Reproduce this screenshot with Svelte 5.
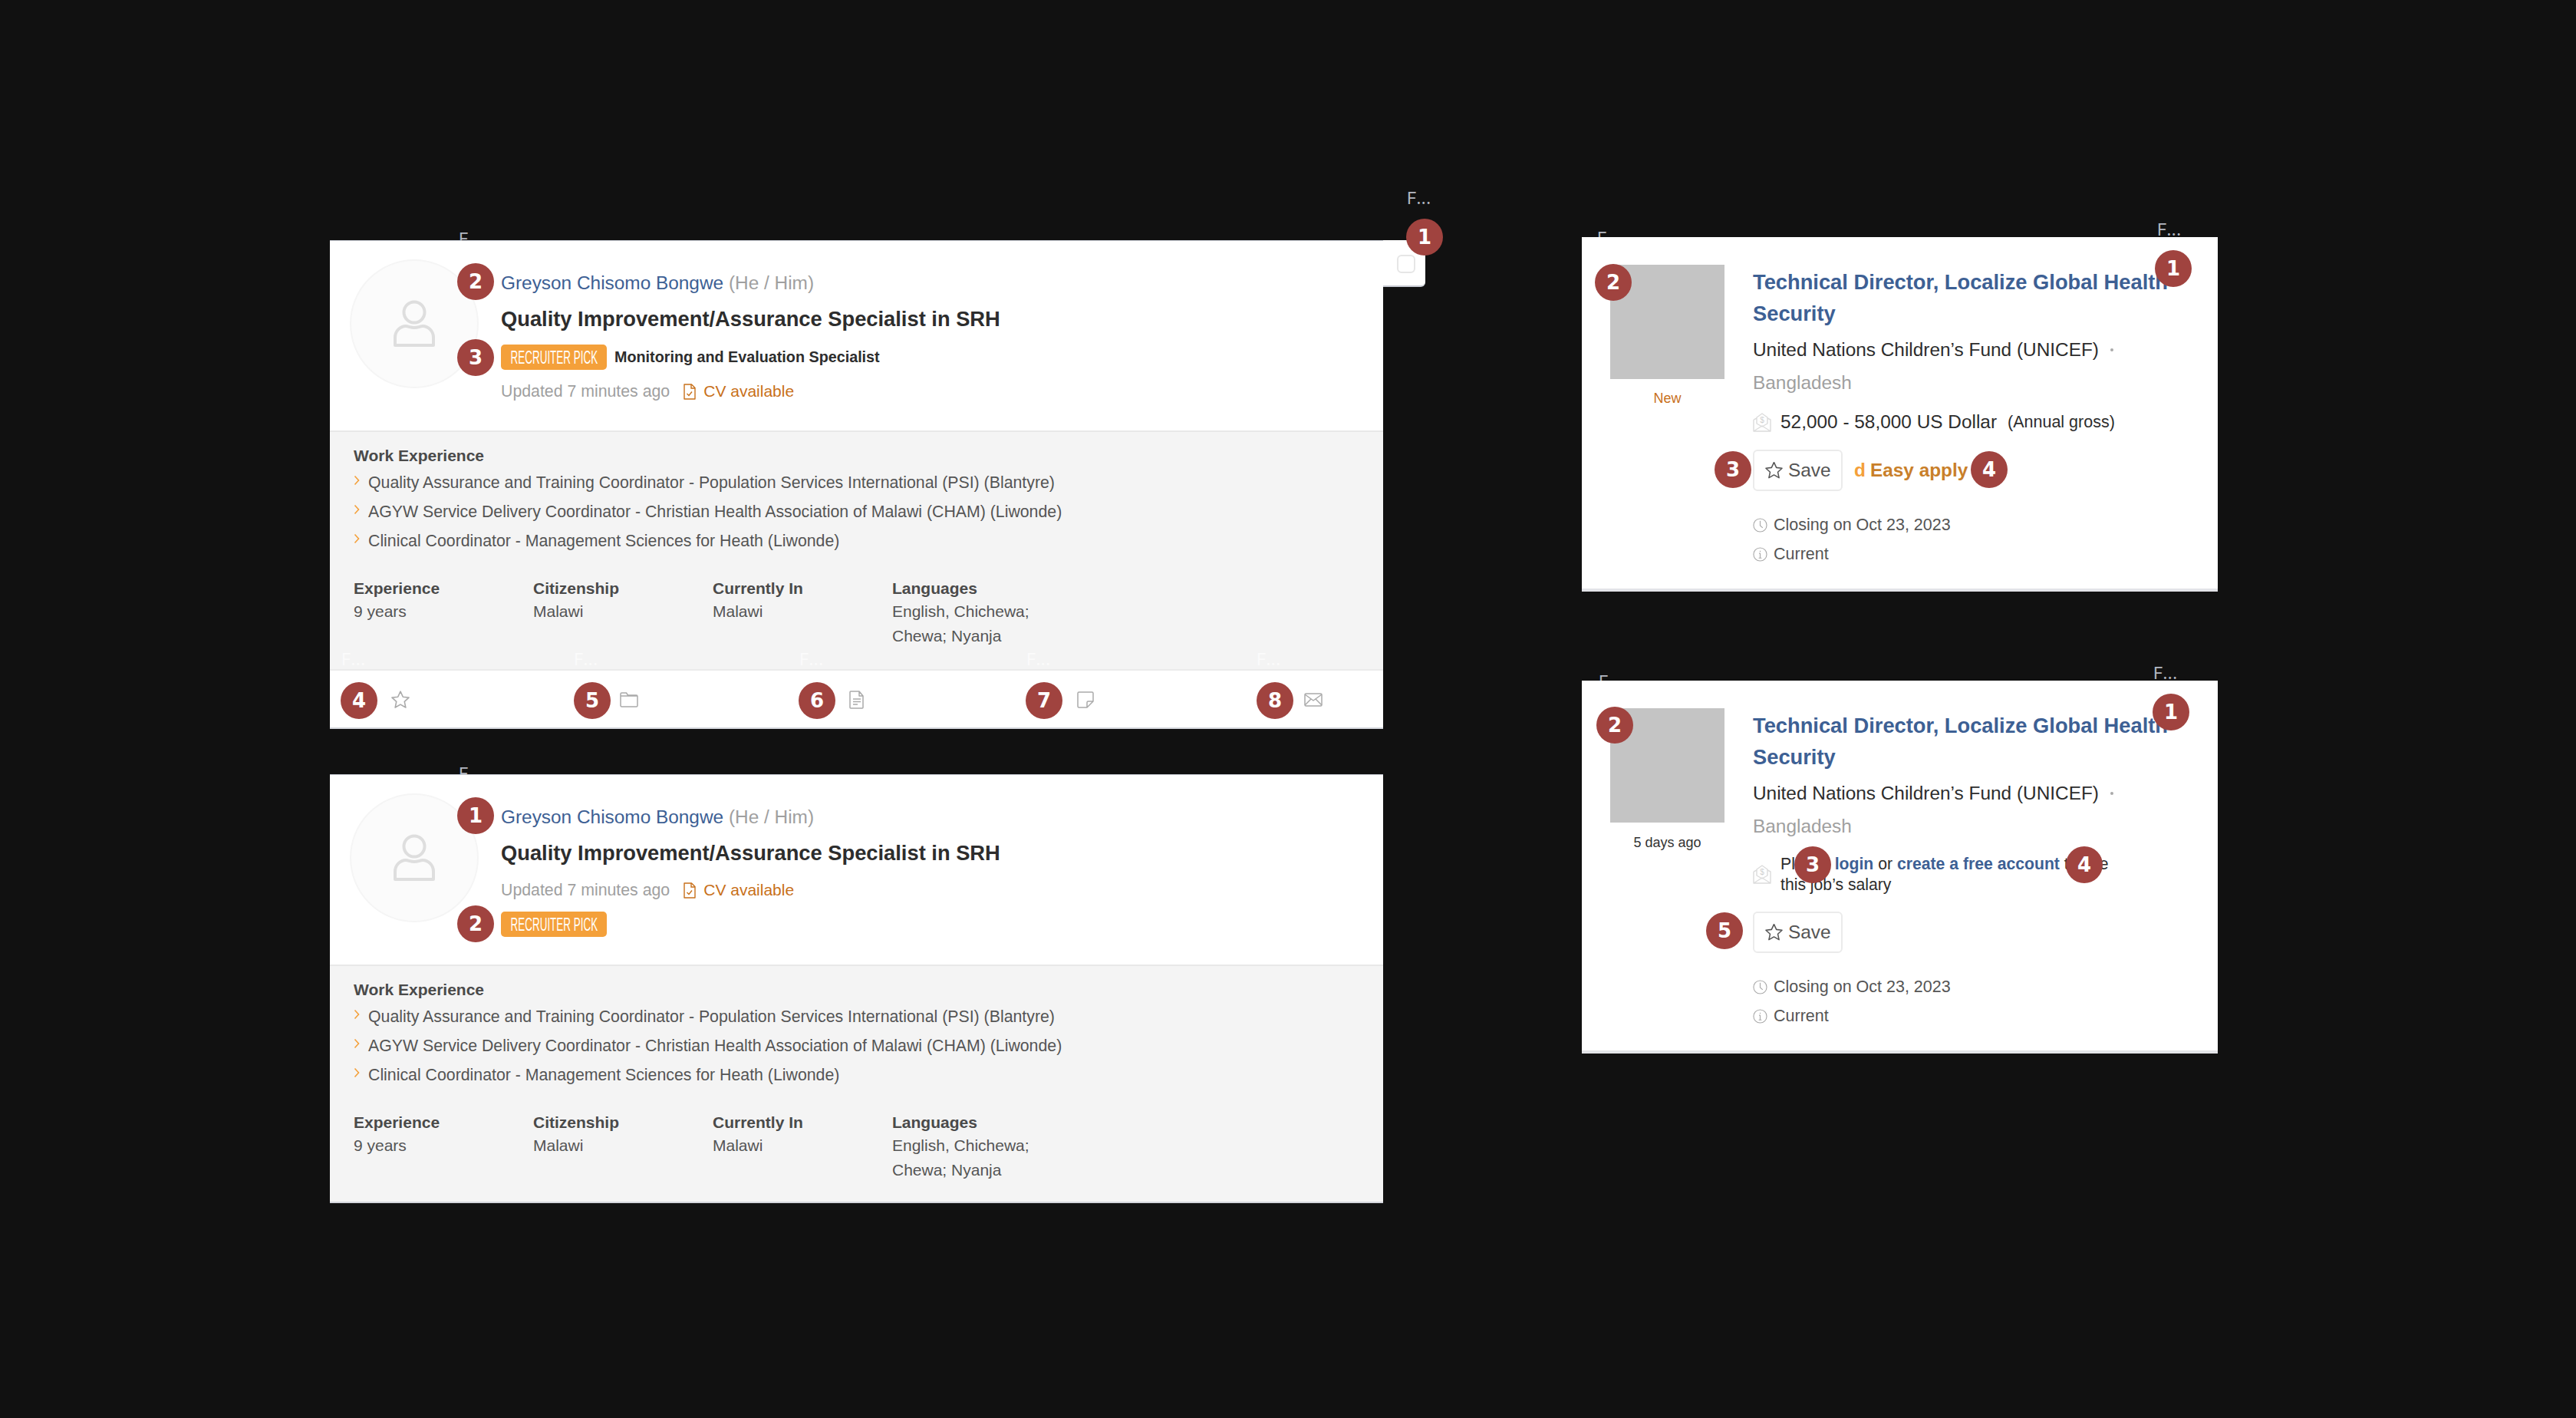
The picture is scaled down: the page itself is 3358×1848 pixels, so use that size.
<script>
  const work = [
    'Quality Assurance and Training Coordinator - Population Services International (PSI) (Blantyre)',
    'AGYW Service Delivery Coordinator - Christian Health Association of Malawi (CHAM) (Liwonde)',
    'Clinical Coordinator - Management Sciences for Heath (Liwonde)'
  ];
  const facts = [
    { label: 'Experience', value: '9 years' },
    { label: 'Citizenship', value: 'Malawi' },
    { label: 'Currently In', value: 'Malawi' },
    { label: 'Languages', value: 'English, Chichewa; Chewa; Nyanja' }
  ];
  const markers = [
    [1, 1857, 309], [2, 620, 367], [3, 620, 466], [4, 468, 913], [5, 772, 913], [6, 1065, 913], [7, 1361, 913], [8, 1662, 913],
    [1, 620, 1063], [2, 620, 1204],
    [1, 2833, 350], [2, 2103, 368], [3, 2259, 612], [4, 2593, 612],
    [1, 2830, 928], [2, 2105, 945], [3, 2363, 1127], [4, 2717, 1127], [5, 2248, 1213]
  ];
  const darkLabels = [
    [598, 298, 'F'], [598, 995, 'F'], [2082, 297, 'F'], [2084, 875, 'F'],
    [1834, 245, 'F...'], [2812, 286, 'F...'], [2807, 864, 'F...']
  ];
  const ghostLabels = [[445, 846], [748, 846], [1042, 846], [1338, 846], [1638, 846]];
</script>

{#snippet star(cls)}
  <svg class={cls} viewBox="1.500 2 21 20" fill="none" stroke="currentColor" stroke-width="1.4" stroke-linejoin="round"><path d="M12 2.500l2.900 6.200 6.700.8-5 4.600 1.400 6.700-6-3.400-6 3.400 1.400-6.700-5-4.600 6.700-.8z"/></svg>
{/snippet}

{#snippet person()}
  <div class="avatar">
    <svg width="56" height="62" viewBox="0 0 56 62" fill="none" stroke="#dedede" stroke-width="4"><circle cx="28" cy="16" r="13.500"/><path d="M3 59V49c0-9 7-15 14-15 3 0 6 2 11 2s8-2 11-2c7 0 14 6 14 15v10z" stroke-linejoin="round"/></svg>
  </div>
{/snippet}

{#snippet details()}
  <div class="body">
    <h4>Work Experience</h4>
    <ul>
      {#each work as w}
        <li><svg class="chev" viewBox="0 0 8 14" fill="none" stroke="#f4a03a" stroke-width="1.600"><path d="M1.500 1.500L6.500 7l-5 5.500"/></svg>{w}</li>
      {/each}
    </ul>
    <div class="facts">
      {#each facts as f}
        <div class="fact"><b>{f.label}</b><span>{f.value}</span></div>
      {/each}
    </div>
  </div>
{/snippet}

{#snippet updated()}
  <div class="meta">
    <span class="upd">Updated 7 minutes ago</span>
    <svg class="cvicon" viewBox="0 0 16 21" fill="none" stroke="#c8701a" stroke-width="1.400"><path d="M1 1h9.500L15 5.500V20H1z" stroke-linejoin="round"/><path d="M10 1v5h5M4.500 13l2.500 2.500 4-5"/></svg>
    <span class="cv">CV available</span>
  </div>
{/snippet}

{#snippet salaryIcon()}
  <svg class="salicon" viewBox="0 0 24 25" fill="none" stroke="#dcdcdc" stroke-width="1.400" stroke-linejoin="round"><path d="M1 9v15h22V9l-4-2M1 9l4-2M1 24l11-7 11 7"/><path d="M5 14V6l7-5 7 5v8l-7 4z"/><text x="12" y="13" font-size="10" text-anchor="middle" fill="#d0d0d0" stroke="none" font-family="Liberation Sans">$</text></svg>
{/snippet}

{#snippet jobHead()}
  <a class="jtitle">Technical Director, Localize Global Health Security</a>
  <div class="org"><span>United Nations Children’s Fund (UNICEF)</span><i class="dot"></i></div>
  <div class="loc">Bangladesh</div>
{/snippet}

{#snippet saveBtn()}
  <span class="save">{@render star('savestar')}Save</span>
{/snippet}

{#snippet closing()}
  <div class="info first">
    <svg viewBox="0 0 20 20" fill="none" stroke="#aaa" stroke-width="1.200"><circle cx="10" cy="10" r="9"/><path d="M10 4v6.500l3.500 3"/></svg>
    <span>Closing on Oct 23, 2023</span>
  </div>
  <div class="info">
    <svg viewBox="0 0 20 20" fill="none" stroke="#aaa" stroke-width="1.200"><circle cx="10" cy="10" r="9"/><path d="M10 8.500V15M10 5v1.600M8 15h4M8.500 8.500H10"/></svg>
    <span>Current</span>
  </div>
{/snippet}

<main class="canvas">
  {#each darkLabels as [x, y, t]}
    <span class="tag" style="left:{x}px;top:{y}px">{t}</span>
  {/each}

  <div class="tab">
    <span class="tabicon"></span>
  </div>

  <section class="card cand one">
    <header class="head">
      {@render person()}
      <div class="col">
        <div class="name"><a>Greyson Chisomo Bongwe</a> <span>(He / Him)</span></div>
        <div class="role">Quality Improvement/Assurance Specialist in SRH</div>
        <div class="pickrow"><span class="badge"><span>RECRUITER PICK</span></span><b>Monitoring and Evaluation Specialist</b></div>
        {@render updated()}
      </div>
    </header>
    {@render details()}
    <footer class="foot">
      {@render star('ficon')}
      <svg class="ficon" viewBox="0 0 24 20" fill="none" stroke="#aaa" stroke-width="1.500" stroke-linejoin="round"><path d="M1 4V2.500C1 1.500 1.500 1 2.500 1h6l2 3h11c1 0 1.500.5 1.500 1.500v12c0 1-.5 1.500-1.500 1.500h-19C1.500 19 1 18.500 1 17.500zM1 5h22"/></svg>
      <svg class="ficon" viewBox="0 0 24 24" fill="none" stroke="#aaa" stroke-width="1.500" stroke-linejoin="round"><path d="M4 1h11l5 6v15c0 .6-.4 1-1 1H4c-.6 0-1-.4-1-1V2c0-.6.4-1 1-1zM15 1v6h5M7 11h10M7 14.500h10M7 18h6"/></svg>
      <svg class="ficon" viewBox="0 0 24 24" fill="none" stroke="#aaa" stroke-width="1.500" stroke-linejoin="round"><path d="M2 3.500C2 2.500 2.500 2 3.500 2h17c1 0 1.500.5 1.500 1.500V14l-8 8H3.500C2.500 22 2 21.500 2 20.500zM22 14h-6.500c-1 0-1.500.5-1.500 1.500V22"/></svg>
      <svg class="ficon" viewBox="0 0 24 18" fill="none" stroke="#aaa" stroke-width="1.500" stroke-linejoin="round"><rect x="1" y="1" width="22" height="16" rx="1.500"/><path d="M1 2l11 8 11-8M1 16l8-8M23 16l-8-8"/></svg>
    </footer>
  </section>

  <section class="card cand two">
    <header class="head">
      {@render person()}
      <div class="col">
        <div class="name"><a>Greyson Chisomo Bongwe</a> <span>(He / Him)</span></div>
        <div class="role">Quality Improvement/Assurance Specialist in SRH</div>
        {@render updated()}
        <div class="pickrow after"><span class="badge"><span>RECRUITER PICK</span></span></div>
      </div>
    </header>
    {@render details()}
  </section>

  <section class="card job three">
    <div class="side"><div class="logo"></div><div class="age new">New</div></div>
    <div class="main">
      {@render jobHead()}
      <div class="salary">
        {@render salaryIcon()}
        <span class="amount">52,000 - 58,000 US Dollar</span><span class="per">(Annual gross)</span>
      </div>
      <div class="actions">
        {@render saveBtn()}
        <b class="d">d</b><b class="easy">Easy apply</b>
      </div>
      {@render closing()}
    </div>
  </section>

  <section class="card job four">
    <div class="side"><div class="logo"></div><div class="age">5 days ago</div></div>
    <div class="main">
      {@render jobHead()}
      <div class="salary login">
        {@render salaryIcon()}
        <p>Please <a>login</a> or <a>create a free account</a> to see this job’s salary</p>
      </div>
      <div class="actions">
        {@render saveBtn()}
      </div>
      {@render closing()}
    </div>
  </section>

  {#each ghostLabels as [x, y]}
    <span class="tag ghost" style="left:{x}px;top:{y}px">F...</span>
  {/each}
  {#each markers as [n, x, y]}
    <span class="marker" style="left:{x - 24}px;top:{y - 24}px">{n}</span>
  {/each}
</main>

<style>
  :global(body) { margin: 0; background: #111; }
  .canvas { position: relative; width: 3358px; height: 1848px; overflow: hidden; background: #111; font-family: "Liberation Sans", Arial, sans-serif; color: #333; }
  .tag { position: absolute; font: 22px "Inter", "Liberation Sans", sans-serif; color: #b4b8c2; white-space: nowrap; line-height: 26px; }
  .tag.ghost { color: #fbfbfb; }
  .marker { position: absolute; width: 48px; height: 48px; border-radius: 50%; background: #a0433f; color: #fff; display: flex; align-items: center; justify-content: center; font: bold 26px "DejaVu Sans", sans-serif; }
  .card { position: absolute; background: #fff; box-sizing: border-box; }
  .cand { left: 430px; width: 1373px; border-top: 1px solid #c6cad2; border-bottom: 2px solid #d4d6dc; display: flex; flex-direction: column; }
  .one { top: 313px; height: 637px; }
  .two { top: 1009px; height: 559px; }
  .job { left: 2062px; width: 829px; border-bottom: 4px solid #e3e4e8; display: flex; }
  .three { top: 309px; height: 462px; }
  .four { top: 887px; height: 486px; }
  .tab { position: absolute; left: 1800px; top: 313px; width: 58px; height: 61px; box-sizing: border-box; background: #fff; border-left: 2px solid #e8e8e8; border-bottom: 2px solid #c9ccd4; border-radius: 0 0 6px 0; }
  .tabicon { position: absolute; left: 19px; top: 19px; width: 24px; height: 24px; box-sizing: border-box; border: 2px solid #e6e6e6; border-radius: 6px; }

  .head { display: flex; gap: 29px; padding: 24px 26px 0; height: 249px; box-sizing: border-box; border-bottom: 2px solid #e8e8e8; }
  .avatar { width: 168px; height: 168px; box-sizing: border-box; flex: none; border-radius: 50%; background: #fbfbfb; border: 2px solid #f5f5f5; display: flex; align-items: center; justify-content: center; }
  .col { padding-top: 15px; min-width: 0; }
  .name { font-size: 24.400px; line-height: 32px; white-space: nowrap; }
  .name a { color: #3d6094; }
  .name span { color: #a0a0a0; }
  .role { font-size: 27.300px; line-height: 40px; font-weight: bold; color: #2d2d2d; margin-top: 11px; white-space: nowrap; }
  .pickrow { display: flex; align-items: center; gap: 10px; margin-top: 13px; height: 33px; }
  .pickrow.after { margin-top: 13px; }
  .pickrow b { font-size: 19.750px; color: #2d2d2d; white-space: nowrap; }
  .badge { width: 138px; height: 33px; border-radius: 5px; background: #f4a03a; color: #fff; display: flex; align-items: center; justify-content: center; font-size: 24px; overflow: hidden; }
  .badge span { display: block; white-space: nowrap; transform: scaleX(0.56); }
  .meta { display: flex; align-items: center; margin-top: 13px; height: 30px; font-size: 21.300px; white-space: nowrap; }
  .upd { color: #a0a0a0; }
  .cvicon { width: 16px; height: 21px; margin: 0 10px 0 18px; }
  .cv { color: #c8701a; font-size: 21px; }

  .body { flex: 1; background: #f4f4f4; padding: 17px 31px 0; box-sizing: border-box; }
  h4 { margin: 0; font-size: 21px; line-height: 28px; color: #4a4a4a; }
  ul { list-style: none; margin: 2px 0 0; padding: 0; }
  li { font-size: 21.300px; line-height: 38px; color: #555; display: flex; align-items: center; white-space: nowrap; }
  .chev { width: 8px; height: 14px; margin: -6px 11px 0 0; }
  .facts { display: grid; grid-template-columns: repeat(4, 234px); margin-top: 29px; }
  .fact { font-size: 21px; color: #555; display: flex; flex-direction: column; padding-right: 20px; line-height: 32px; }
  .fact b { color: #4a4a4a; line-height: 28px; }
  .foot { height: 76px; box-sizing: border-box; border-top: 2px solid #ebebeb; padding: 2px 79px 0 80px; display: flex; align-items: center; justify-content: space-between; color: #aaa; }
  .ficon { width: 24px; height: 24px; }

  .side { width: 149px; margin: 36px 37px 0 37px; flex: none; }
  .logo { height: 149px; background: #c4c4c4; }
  .age { font-size: 18px; text-align: center; margin-top: 14px; color: #333; line-height: 24px; }
  .age.new { color: #c8701a; margin-top: 13px; }
  .main { padding-top: 38px; flex: 1; min-width: 0; padding-right: 50px; }
  .jtitle { display: block; font-size: 27.300px; line-height: 41px; font-weight: bold; color: #3d6094; }
  .org { display: flex; align-items: center; font-size: 24.400px; line-height: 34px; color: #2d2d2d; margin-top: 10px; }
  .dot { width: 4px; height: 4px; margin-left: 15px; background: #aaa; border-radius: 50%; }
  .loc { font-size: 24.400px; line-height: 34px; color: #a0a0a0; margin-top: 9px; }
  .salary { display: flex; align-items: center; margin-top: 20px; font-size: 24.400px; line-height: 28px; color: #2d2d2d; white-space: nowrap; }
  .salicon { width: 24px; height: 25px; margin-right: 12px; flex: none; }
  .per { font-size: 21.500px; margin-left: 14px; }
  .login p { margin: 0; font-size: 21.200px; line-height: 27px; white-space: normal; width: 440px; }
  .salary.login { margin-top: 18px; }
  .login a { color: #3d6094; font-weight: bold; }
  .actions { display: flex; align-items: center; margin-top: 22px; font-size: 24.400px; }
  .save { display: flex; align-items: center; width: 117px; height: 54px; box-sizing: border-box; border: 2px solid #ebebeb; border-radius: 6px; padding-left: 14px; color: #555; }
  .savestar { width: 23px; height: 22px; margin-right: 7px; color: #555; }
  .d { color: #f4a03a; margin-left: 15px; }
  .easy { color: #c97f2a; margin-left: 6px; }
  .info { display: flex; align-items: center; font-size: 21.500px; line-height: 38px; color: #555; }
  .info.first { margin-top: 25px; }
  .info svg { width: 19px; height: 19px; margin-right: 8px; flex: none; }
</style>
